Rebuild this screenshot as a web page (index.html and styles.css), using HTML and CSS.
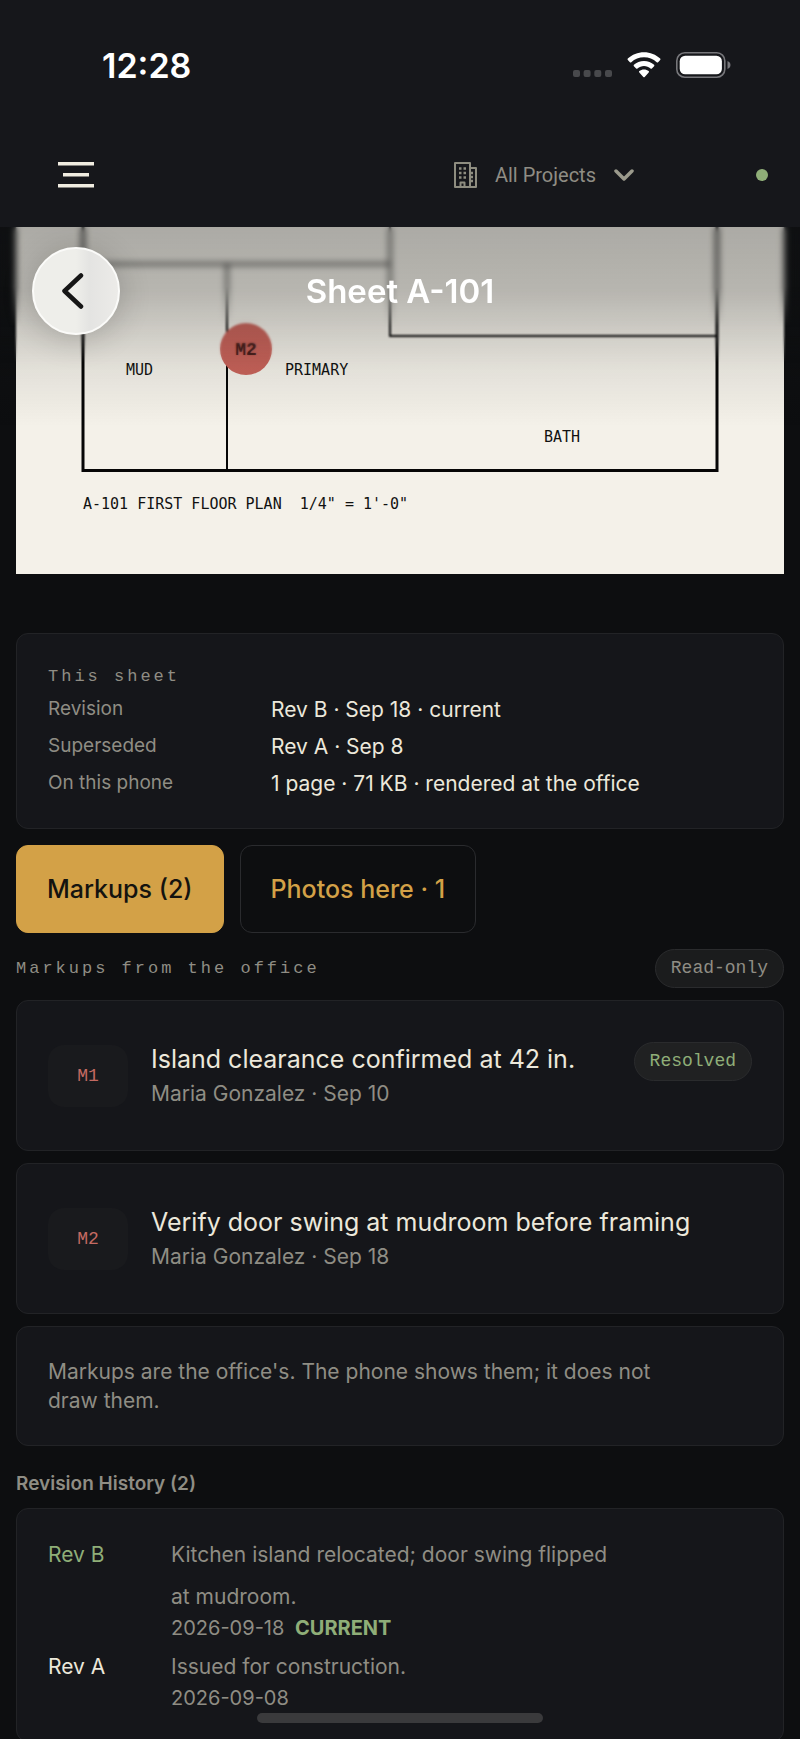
FILE: index.html
```html
<!DOCTYPE html>
<html lang="en">
<head>
  <meta charset="UTF-8">
  <meta name="viewport" content="width=device-width, initial-scale=1.0">
  <title>Sheet A-101</title>
  <link rel="stylesheet" href="styles.css">
</head>
<body>
  <header class="top-bar">
    <div class="status-bar">
      <span class="status-time">12:28</span>
      <div class="status-icons">
        <svg class="signal" width="39" height="8" viewBox="0 0 39 8" fill="#48494c" aria-hidden="true">
          <rect x="0" y="0" width="7" height="7" rx="2"/>
          <rect x="10.6" y="0" width="7" height="7" rx="2"/>
          <rect x="21.3" y="0" width="7" height="7" rx="2"/>
          <rect x="32" y="0" width="7" height="7" rx="2"/>
        </svg>
        <svg width="34" height="26" viewBox="0 0 34 26" fill="#fff" aria-hidden="true">
          <path d="M17 0.2C10.8 0.2 5.1 2.6 0.8 6.6C0.4 7 0.4 7.6 0.8 8L2.9 10.2C3.3 10.6 3.9 10.6 4.3 10.2C7.7 7.1 12.2 5.3 17 5.3C21.8 5.3 26.3 7.1 29.7 10.2C30.1 10.6 30.7 10.6 31.1 10.2L33.2 8C33.6 7.6 33.6 7 33.2 6.6C28.9 2.6 23.2 0.2 17 0.2Z"/>
          <path d="M17 8.9C13.1 8.9 9.6 10.4 6.9 12.8C6.5 13.2 6.5 13.8 6.9 14.2L9.1 16.4C9.5 16.8 10.1 16.8 10.5 16.4C12.3 14.9 14.5 14 17 14C19.5 14 21.7 14.9 23.5 16.4C23.9 16.8 24.5 16.8 24.9 16.4L27.1 14.2C27.5 13.8 27.5 13.2 27.1 12.8C24.4 10.4 20.9 8.9 17 8.9Z"/>
          <path d="M17 17.4C15.2 17.4 13.6 18 12.3 19.1C11.9 19.4 11.9 20 12.3 20.4L16.3 24.9C16.7 25.3 17.3 25.3 17.7 24.9L21.7 20.4C22.1 20 22.1 19.4 21.7 19.1C20.4 18 18.8 17.4 17 17.4Z"/>
        </svg>
        <svg width="56" height="26" viewBox="0 0 56 26" aria-hidden="true">
          <rect x="0.8" y="0.8" width="48" height="24.4" rx="8" fill="none" stroke="#77777b" stroke-width="1.6"/>
          <rect x="3.7" y="3.7" width="42.2" height="18.6" rx="5.5" fill="#fff"/>
          <path d="M51.5 9v8c1.8-0.7 3-2.2 3-4s-1.2-3.3-3-4z" fill="#77777b"/>
        </svg>
      </div>
    </div>
    <nav class="nav-bar">
      <button class="icon-btn" type="button" aria-label="Open menu">
        <svg width="36" height="26" viewBox="0 0 36 26" fill="#f0ece0" aria-hidden="true">
          <rect x="0" y="0" width="36" height="3.5"/>
          <rect x="5" y="11" width="26" height="3.5"/>
          <rect x="0" y="22" width="36" height="3.5"/>
        </svg>
      </button>
      <button class="project-btn" type="button">
        <svg width="23" height="26" viewBox="0 0 23 26" fill="none" stroke="#8e8d80" stroke-width="2" stroke-linejoin="round" aria-hidden="true">
          <path d="M1 1h15v24H1z"/>
          <path d="M16 6h6v19h-6"/>
          <path d="M6.5 25v-4.500h4V25"/>
          <path d="M5 6.500h2.500M9.500 6.500H12M5 11h2.500M9.500 11H12M5 15.500h2.500M9.500 15.500H12M17 11h2M17 15h2M17 19h2" stroke-width="2.500"/>
        </svg>
        <span>All Projects</span>
        <svg width="20" height="12" viewBox="0 0 20 12" fill="none" stroke="#9b9a8c" stroke-width="3.500" stroke-linecap="round" stroke-linejoin="round" aria-hidden="true">
          <path d="M2 2l8 8 8-8"/>
        </svg>
      </button>
      <span class="sync-dot" role="img" aria-label="Synced"></span>
    </nav>
  </header>

  <main class="content">
    <section class="sheet">
      <svg class="plan" viewBox="0 0 768 347" role="img" aria-label="First floor plan">
        <rect width="768" height="347" fill="#f4f1e9"/>
        <g fill="none" stroke="#060606">
          <path d="M67 -20V243.500H701V-20" stroke-width="3"/>
          <path d="M67 37H374M211 37V243M374 -20V109H701" stroke-width="2"/>
        </g>
        <circle cx="230" cy="122" r="26" fill="#c9635a"/>
        <text class="pin-text" x="230" y="128" text-anchor="middle">M2</text>
        <g class="plan-text">
          <text x="110" y="148">MUD</text>
          <text x="269" y="148">PRIMARY</text>
          <text x="528" y="215">BATH</text>
          <text x="67" y="282" xml:space="preserve">A-101 FIRST FLOOR PLAN  1/4" = 1'-0"</text>
        </g>
      </svg>
      <div class="fade-blur fade-blur-soft"></div>
      <div class="fade-blur"></div>
      <div class="fade-tint"></div>
      <div class="sheet-head">
        <button class="back-btn" type="button" aria-label="Back">
          <svg width="22" height="36" viewBox="0 0 22 36" fill="none" stroke="#161616" stroke-width="4.500" stroke-linecap="round" stroke-linejoin="round" aria-hidden="true">
            <path d="M19 2.500L2.500 18L19 33.500"/>
          </svg>
        </button>
        <h1 class="sheet-title">Sheet A-101</h1>
      </div>
    </section>

    <section class="card info-card">
      <h2 class="mono-label">This sheet</h2>
      <dl class="info-list">
        <dt>Revision</dt>
        <dd>Rev B · Sep 18 · current</dd>
        <dt>Superseded</dt>
        <dd>Rev A · Sep 8</dd>
        <dt>On this phone</dt>
        <dd>1 page · 71 KB · rendered at the office</dd>
      </dl>
    </section>

    <div class="tabs">
      <button class="tab active" type="button">Markups (2)</button>
      <button class="tab" type="button">Photos here · 1</button>
    </div>

    <div class="section-head">
      <h2 class="mono-label">Markups from the office</h2>
      <span class="pill">Read-only</span>
    </div>

    <div class="markup-list">
      <article class="card markup">
        <span class="markup-tag">M1</span>
        <div class="markup-body">
          <h3>Island clearance confirmed at 42 in.</h3>
          <p>Maria Gonzalez · Sep 10</p>
        </div>
        <span class="pill pill-green">Resolved</span>
      </article>
      <article class="card markup">
        <span class="markup-tag">M2</span>
        <div class="markup-body">
          <h3>Verify door swing at mudroom before framing</h3>
          <p>Maria Gonzalez · Sep 18</p>
        </div>
      </article>
      <div class="card note">
        <p>Markups are the office's. The phone shows them; it does not draw them.</p>
      </div>
    </div>

    <h2 class="history-title">Revision History (2)</h2>
    <div class="card history">
      <div class="history-row">
        <span class="rev rev-current">Rev B</span>
        <div class="history-body">
          <p class="history-desc">Kitchen island relocated; door swing flipped at mudroom.</p>
          <p class="history-date">2026-09-18 <strong>CURRENT</strong></p>
        </div>
      </div>
      <div class="history-row">
        <span class="rev">Rev A</span>
        <div class="history-body">
          <p class="history-desc">Issued for construction.</p>
          <p class="history-date">2026-09-08</p>
        </div>
      </div>
    </div>
  </main>

  <div class="home-indicator"></div>
</body>
</html>
```

FILE: styles.css
```css
:root {
  --bg: #0d0e10;
  --surface: #15161a;
  --border: #222326;
  --cream: #ece8db;
  --muted: #8f8d84;
  --amber: #d3a147;
  --green: #8fae78;
  --red: #c46a62;
  --sans: Inter, "Liberation Sans", sans-serif;
  --mono: "Liberation Mono", monospace;
}

* {
  box-sizing: border-box;
}

body {
  margin: 0;
  height: 100vh;
  overflow: hidden;
  display: flex;
  flex-direction: column;
  background-color: var(--bg);
  color: var(--cream);
  font-family: var(--sans);
}

h1, h2, h3, p, dl, dd {
  margin: 0;
  font-weight: 400;
}

button {
  font-family: inherit;
  cursor: pointer;
}

/* Header */
.top-bar {
  flex: none;
  background-color: #16171b;
}

.status-bar {
  display: flex;
  justify-content: space-between;
  align-items: center;
  height: 130px;
  padding: 0 68px 0 102px;
}

.status-time {
  color: #fff;
  font-size: 34px;
  font-weight: 600;
}

.status-icons {
  display: flex;
  align-items: center;
  gap: 15px;
}

.signal {
  align-self: flex-end;
}

.nav-bar {
  display: flex;
  align-items: center;
  height: 97px;
  padding: 0 32px 7px 48px;
}

.icon-btn {
  display: flex;
  padding: 10px;
  background: none;
  border: none;
}

.project-btn {
  display: flex;
  align-items: center;
  gap: 18px;
  margin-left: auto;
  margin-right: 122px;
  padding: 0;
  background: none;
  border: none;
  color: var(--muted);
  font-family: Roboto, sans-serif;
  font-size: 20px;
}

.sync-dot {
  width: 12px;
  height: 12px;
  border-radius: 50%;
  background-color: var(--green);
}

/* Sheet preview */
.content {
  flex: 1;
  min-height: 0;
  overflow: hidden;
}

.sheet {
  position: relative;
  padding: 0 16px;
  margin-bottom: 59px;
}

.plan {
  display: block;
  width: 100%;
}

.plan-text {
  fill: #111;
  font-family: "DejaVu Sans Mono", monospace;
  font-size: 15px;
}

.pin-text {
  fill: #3a1715;
  font-family: var(--mono);
  font-size: 18px;
  font-weight: 700;
}

.fade-blur {
  position: absolute;
  inset: 0 0 auto;
  height: 100px;
  backdrop-filter: blur(3px);
  mask-image: linear-gradient(#000 60%, transparent);
}

.fade-blur-soft {
  height: 136px;
  backdrop-filter: blur(1px);
  mask-image: linear-gradient(#000 80%, transparent);
}

.fade-tint {
  position: absolute;
  inset: 0 0 auto;
  height: 200px;
  background: linear-gradient(rgba(20, 22, 22, 0.32), rgba(20, 22, 22, 0.27) 32%, rgba(20, 22, 22, 0.15) 56%, rgba(20, 22, 22, 0.07) 72%, transparent);
}

.sheet-head {
  position: absolute;
  top: 20px;
  left: 32px;
  right: 32px;
  display: grid;
  grid-template-columns: 88px 1fr 88px;
  align-items: center;
}

.back-btn {
  display: flex;
  justify-content: center;
  align-items: center;
  height: 88px;
  padding: 0 6px 0 0;
  border: 2px solid #fbfbf9;
  border-radius: 50%;
  background: linear-gradient(90deg, #eeeeea 50%, #e4e4e2 66%, #ecebe8);
  box-shadow: 0 4px 32px rgba(0, 0, 0, 0.2);
}

.sheet-title {
  color: #fff;
  font-size: 33px;
  font-weight: 600;
  text-align: center;
}

/* Cards */
.card {
  background-color: var(--surface);
  border: 1px solid var(--border);
  border-radius: 12px;
}

.mono-label {
  color: var(--muted);
  font-family: var(--mono);
  font-size: 17px;
  line-height: 24px;
  letter-spacing: 3px;
}

.info-card {
  margin: 0 16px 16px;
  padding: 31px 31px 26px;
}

.info-list {
  display: grid;
  grid-template-columns: 223px 1fr;
  margin-top: 2px;
}

.info-list dt {
  color: var(--muted);
  font-size: 19px;
  line-height: 35px;
}

.info-list dd {
  font-size: 21px;
  line-height: 37px;
}

.tabs {
  display: flex;
  gap: 16px;
  margin: 0 16px 16px;
}

.tab {
  height: 88px;
  padding: 0 30px;
  background: none;
  border: 1px solid #2a2b2e;
  border-radius: 12px;
  color: var(--amber);
  font-size: 25px;
  font-weight: 500;
}

.tab.active {
  background-color: var(--amber);
  border-color: var(--amber);
  color: #14130f;
}

.section-head {
  display: flex;
  justify-content: space-between;
  align-items: center;
  margin: 0 16px 12px;
}

.pill {
  padding: 0 15px;
  background-color: #1b1c1d;
  border: 1px solid #2a2b2d;
  border-radius: 20px;
  color: var(--muted);
  font-family: var(--mono);
  font-size: 18px;
  line-height: 37px;
}

.pill-green {
  background-color: #202122;
  color: var(--green);
}

/* Markups */
.markup-list {
  display: grid;
  gap: 12px;
  margin: 0 16px;
}

.markup {
  display: flex;
  align-items: flex-start;
  padding: 41px 31px 40px;
}

.markup-tag {
  align-self: center;
  width: 80px;
  margin-right: 23px;
  background-color: #191a1d;
  border-radius: 16px;
  color: var(--red);
  font-family: var(--mono);
  font-size: 18px;
  line-height: 62px;
  text-align: center;
}

.markup-body {
  flex: 1;
}

.markup-body h3 {
  font-size: 25px;
  line-height: 34px;
}

.markup-body p {
  margin-top: 2px;
  color: var(--muted);
  font-size: 21px;
  line-height: 32px;
}

.note {
  padding: 30px 31px;
}

.note p {
  max-width: 640px;
  color: var(--muted);
  font-size: 21px;
  line-height: 29px;
}

/* History */
.history-title {
  margin: 24px 16px 10px;
  color: var(--muted);
  font-size: 19px;
  font-weight: 600;
  line-height: 28px;
}

.history {
  margin: 0 16px;
  padding: 25px 31px;
}

.history-row {
  display: grid;
  grid-template-columns: 123px 1fr;
  font-size: 21px;
  line-height: 42px;
}

.rev-current {
  color: var(--green);
}

.history-desc {
  max-width: 456px;
  color: var(--muted);
}

.history-date {
  margin-bottom: 8px;
  color: var(--muted);
  font-size: 20px;
  line-height: 20px;
}

.history-date strong {
  margin-left: 5px;
  color: var(--green);
}

.home-indicator {
  position: fixed;
  bottom: 16px;
  left: 50%;
  width: 286px;
  height: 10px;
  margin-left: -143px;
  border-radius: 5px;
  background-color: #3a3a3c;
}
```
